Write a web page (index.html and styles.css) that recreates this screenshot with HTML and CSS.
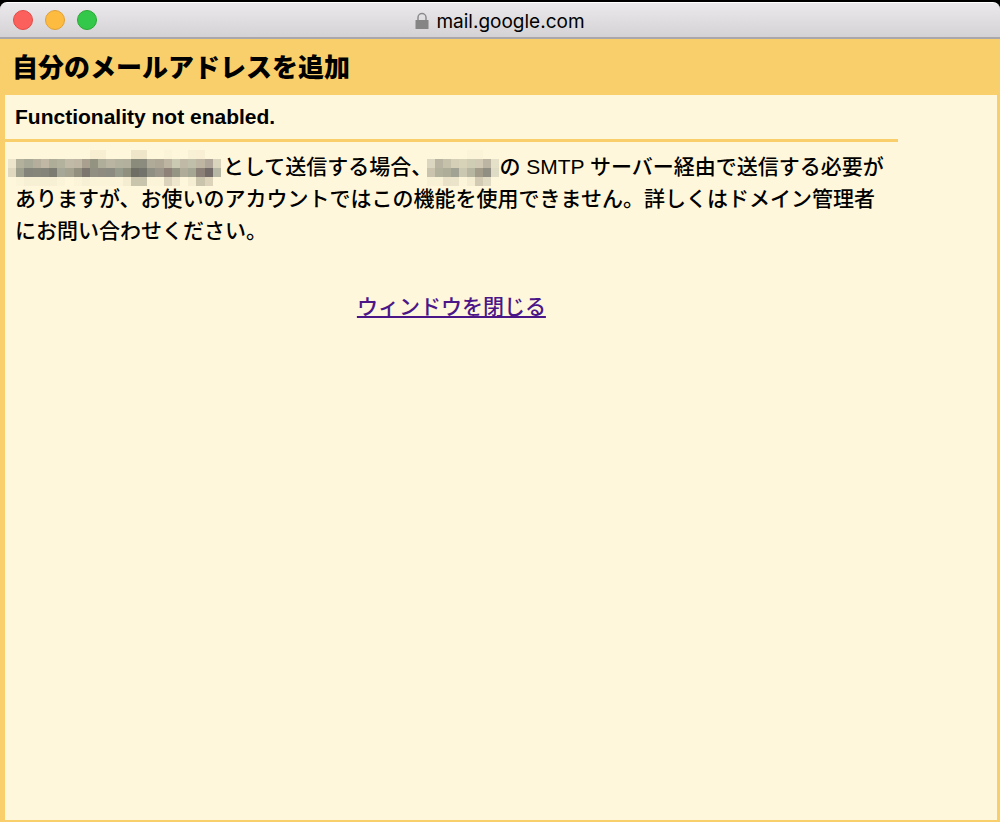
FILE: index.html
```html
<!DOCTYPE html>
<html lang="ja">
<head>
<meta charset="utf-8">
<meta name="viewport" content="width=device-width, initial-scale=1">
<title>自分のメールアドレスを追加</title>
<link rel="stylesheet" href="styles.css">
</head>
<body>
<div class="window">
  <header class="titlebar">
    <div class="controls">
      <button class="control close" aria-label="閉じる"></button>
      <button class="control minimize" aria-label="最小化"></button>
      <button class="control zoom" aria-label="拡大"></button>
    </div>
    <div class="address">
      <svg class="lock" viewBox="0 0 14 18" aria-hidden="true"><path d="M3 9V5.500a4 4 0 0 1 8 0V9" fill="none" stroke="#8b8b8c" stroke-width="1.500"/><rect x="0.500" y="8" width="13" height="9" rx="0.500" fill="#858585"/></svg>
      <span>mail.google.com</span>
    </div>
  </header>
  <main class="page">
    <h1 class="heading">自分のメールアドレスを追加</h1>
    <div class="panel">
      <div class="content">
        <h2 class="status">Functionality not enabled.</h2>
        <p class="message"><svg class="mosaic wide" viewBox="0 0 26 4" preserveAspectRatio="none" shape-rendering="crispEdges" aria-hidden="true"></svg>として送信する場合、<svg class="mosaic narrow" viewBox="0 0 9 4" preserveAspectRatio="none" shape-rendering="crispEdges" aria-hidden="true"></svg>の SMTP サーバー経由で送信する必要がありますが、お使いのアカウントではこの機能を使用できません。詳しくはドメイン管理者にお問い合わせください。</p>
        <div class="actions"><a class="close-link" href="#">ウィンドウを閉じる</a></div>
      </div>
    </div>
  </main>
</div>
<script src="mosaic.js"></script>
</body>
</html>
```

FILE: styles.css
```css
* { box-sizing: border-box; }
body {
  margin: 0;
  background: #000;
  color: #000;
  font-family: "Liberation Sans", "Noto Sans CJK JP", sans-serif;
}
.window {
  display: flex;
  flex-direction: column;
  min-height: 100vh;
  padding-top: 2px;
}
.titlebar {
  display: grid;
  grid-template-columns: 1fr auto 1fr;
  align-items: center;
  height: 37px;
  padding: 0 13px;
  border-top: 1px solid #fff;
  border-bottom: 2px solid #a9a7a9;
  border-radius: 7px 7px 0 0;
  background: linear-gradient(#ebe9eb, #d4d2d4);
}
.controls { display: flex; gap: 12px; }
.control {
  width: 20px;
  height: 20px;
  padding: 0;
  border: 1px solid;
  border-radius: 50%;
}
.close { background: #fc605c; border-color: #e24b48; }
.minimize { background: #fdbc40; border-color: #e0a033; }
.zoom { background: #34c84a; border-color: #27a833; }
.address {
  display: flex;
  align-items: center;
  gap: 7px;
  padding-top: 4px;
  font: 19px/24px Inter, sans-serif;
}
.lock { width: 14px; height: 18px; margin-bottom: 2px; }
.page {
  display: flex;
  flex: 1;
  flex-direction: column;
  padding: 0 3px 2px 5px;
  background: #f9cf6b;
}
.heading {
  margin: 0;
  padding: 11px 7px 9px;
  font-size: 26px;
  font-weight: 900;
  line-height: 36px;
}
.panel {
  flex: 1;
  background: #fff7db;
}
.content { width: 90%; }
.status {
  margin: 0;
  padding: 6px 10px;
  border-bottom: 3px solid #f9cf6b;
  font-size: 21px;
  line-height: 32px;
}
.message {
  margin: 0;
  padding: 9px 10px 8px;
  font-size: 21px;
  font-weight: 500;
  line-height: 32px;
}
.mosaic {
  height: 36px;
  margin-top: -8px;
  margin-bottom: -8px;
  vertical-align: middle;
}
.wide {
  width: 213px;
  margin-left: -7px;
  margin-right: 2px;
}
.narrow {
  width: 72px;
  margin-left: -5px;
}
.actions {
  padding-top: 36px;
  text-align: center;
}
.close-link {
  color: #4b1688;
  font-size: 21px;
  font-weight: 500;
  line-height: 32px;
}
```

FILE: mosaic.js
```js
// Each row lists its cell colours from left to right; "-" leaves a cell clear.
const mosaics = {
  ".wide": [
    "- - - - - - - - - - f8efd3 f8efd3 - - - efe6ca efe6ca - - fcf4d8 - - f9f1d5 f8efd4 - -",
    "ece5cb b3b19b a9a998 b6ae9c c0b7a5 adad98 b3b39d c0baa6 bfb7a4 a9a090 949382 afae9b b9b5a2 b3b29f b3b19d 8b8b7c 8b8c7e b0ab99 aea795 bdb5a2 cacab3 c0b9a5 c0bfaa bfb5a3 b0a79a d9d5bd",
    "e0d9c0 a0a08e 84847a 86867a 84847a 7c7c72 a6a796 a5a38f 949080 7c766e 918e82 8f8b80 8b8b82 979b8b 8f907e 6e6e65 72736a 8f8f84 9b958a 8d8178 949583 b0ac9a a6a694 8b8078 716a66 b7b7a6",
    "- fcf4d8 f8f0d4 f8f0d4 f8f0d4 f8f0d4 fcf4d8 - fcf4d8 f8f0d4 fcf4d8 fcf4d8 fcf4d8 fcf4d8 f5edd2 c9c5ad c9c5ad fcf4d8 fcf4d8 dbd3bb efe7cd - f6eed2 cbc4ac dcd3ba -"
  ],
  ".narrow": [
    "- - - - - fcf4d8 fcf4d8 - -",
    "dbd6bf b9b3a1 c6c1ab d6cfb8 d6d3b9 cfceb5 d1c9b3 bdb5a4 e5e1c9",
    "cac4ae b1b19c adad9a a1a294 cac8b0 b7b7a1 a39c8b 918e83 dfdcc6",
    "f8f1d5 f8f1d5 e9e2c9 ebe4ca fdf5da f5edd2 d2cab2 e1dbc3 -"
  ]
};
for (const [selector, rows] of Object.entries(mosaics)) {
  const svg = document.querySelector(selector);
  rows.forEach((row, y) => row.split(" ").forEach((colour, x) => {
    if (colour === "-") return;
    const cell = document.createElementNS("http://www.w3.org/2000/svg", "rect");
    const attributes = { x, y, width: 1, height: 1, fill: "#" + colour };
    for (const name in attributes) cell.setAttribute(name, attributes[name]);
    svg.append(cell);
  }));
}
```
